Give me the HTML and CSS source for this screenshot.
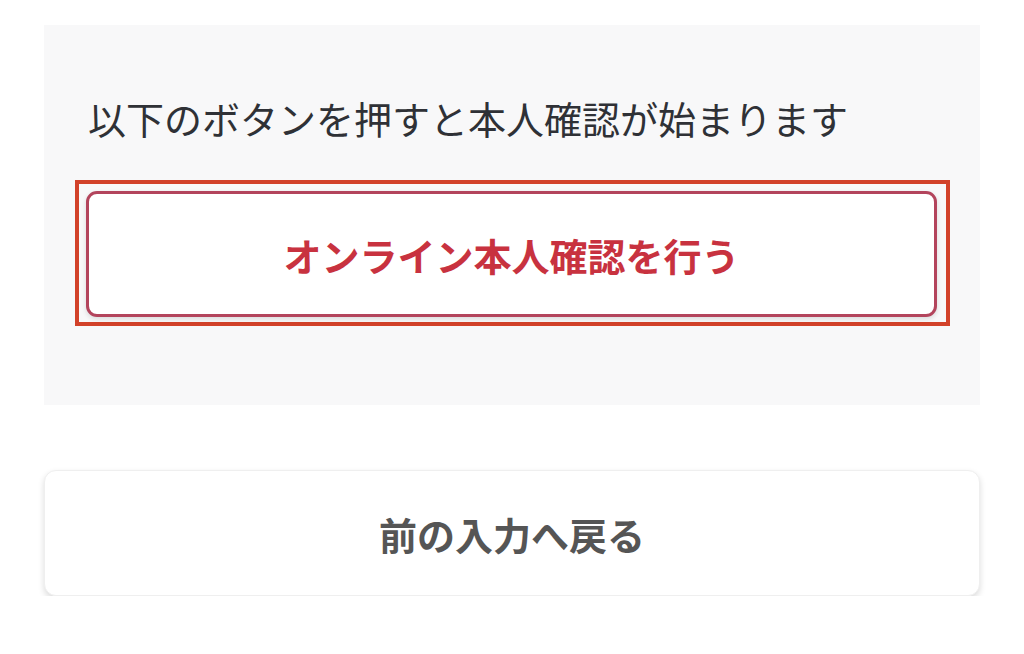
FILE: index.html
```html
<!DOCTYPE html>
<html lang="ja">
<head>
<meta charset="utf-8">
<title>本人確認</title>
<link rel="stylesheet" href="styles.css">
</head>
<body>
<main class="page">
  <section class="panel">
    <p class="lead">以下のボタンを押すと本人確認が始まります</p>
    <div class="highlight">
      <button class="btn btn-primary" type="button">オンライン本人確認を行う</button>
    </div>
  </section>
  <button class="btn btn-back" type="button">前の入力へ戻る</button>
</main>
</body>
</html>
```
FILE: styles.css
```css
* { box-sizing: border-box; }
html, body {
  margin: 0;
  padding: 0;
  background: #ffffff;
}
body {
  font-family: "Noto Sans CJK JP", "Noto Sans", sans-serif;
}
.page {
  display: flex;
  flex-direction: column;
  padding: 25px 44px 0;
}
.panel {
  background: #f8f8f9;
  padding: 65px 30px 79px 31px;
  display: flex;
  flex-direction: column;
}
.lead {
  margin: 0 0 34px 13px;
  font-size: 38px;
  line-height: 56px;
  color: #2f3136;
  font-weight: 400;
}
.highlight {
  border: 4px solid #d2422a;
  padding: 7px 9px 5px 7px;
}
.btn {
  font-family: "Noto Sans CJK JP", "Noto Sans", sans-serif;
  font-size: 38px;
  font-weight: 700;
  height: 126px;
  width: 100%;
  background: #ffffff;
  cursor: pointer;
  display: flex;
  align-items: center;
  justify-content: center;
  padding: 0;
}
.btn-primary {
  color: #c8323f;
  border: 3px solid #b3445c;
  border-radius: 11px;
  box-shadow: 0 2px 5px rgba(0, 0, 0, 0.12);
}
.btn-back {
  margin-top: 65px;
  color: #555555;
  border: 1px solid #efefef;
  border-radius: 12px;
  box-shadow: 0 3px 6px rgba(0, 0, 0, 0.14);
}
```
